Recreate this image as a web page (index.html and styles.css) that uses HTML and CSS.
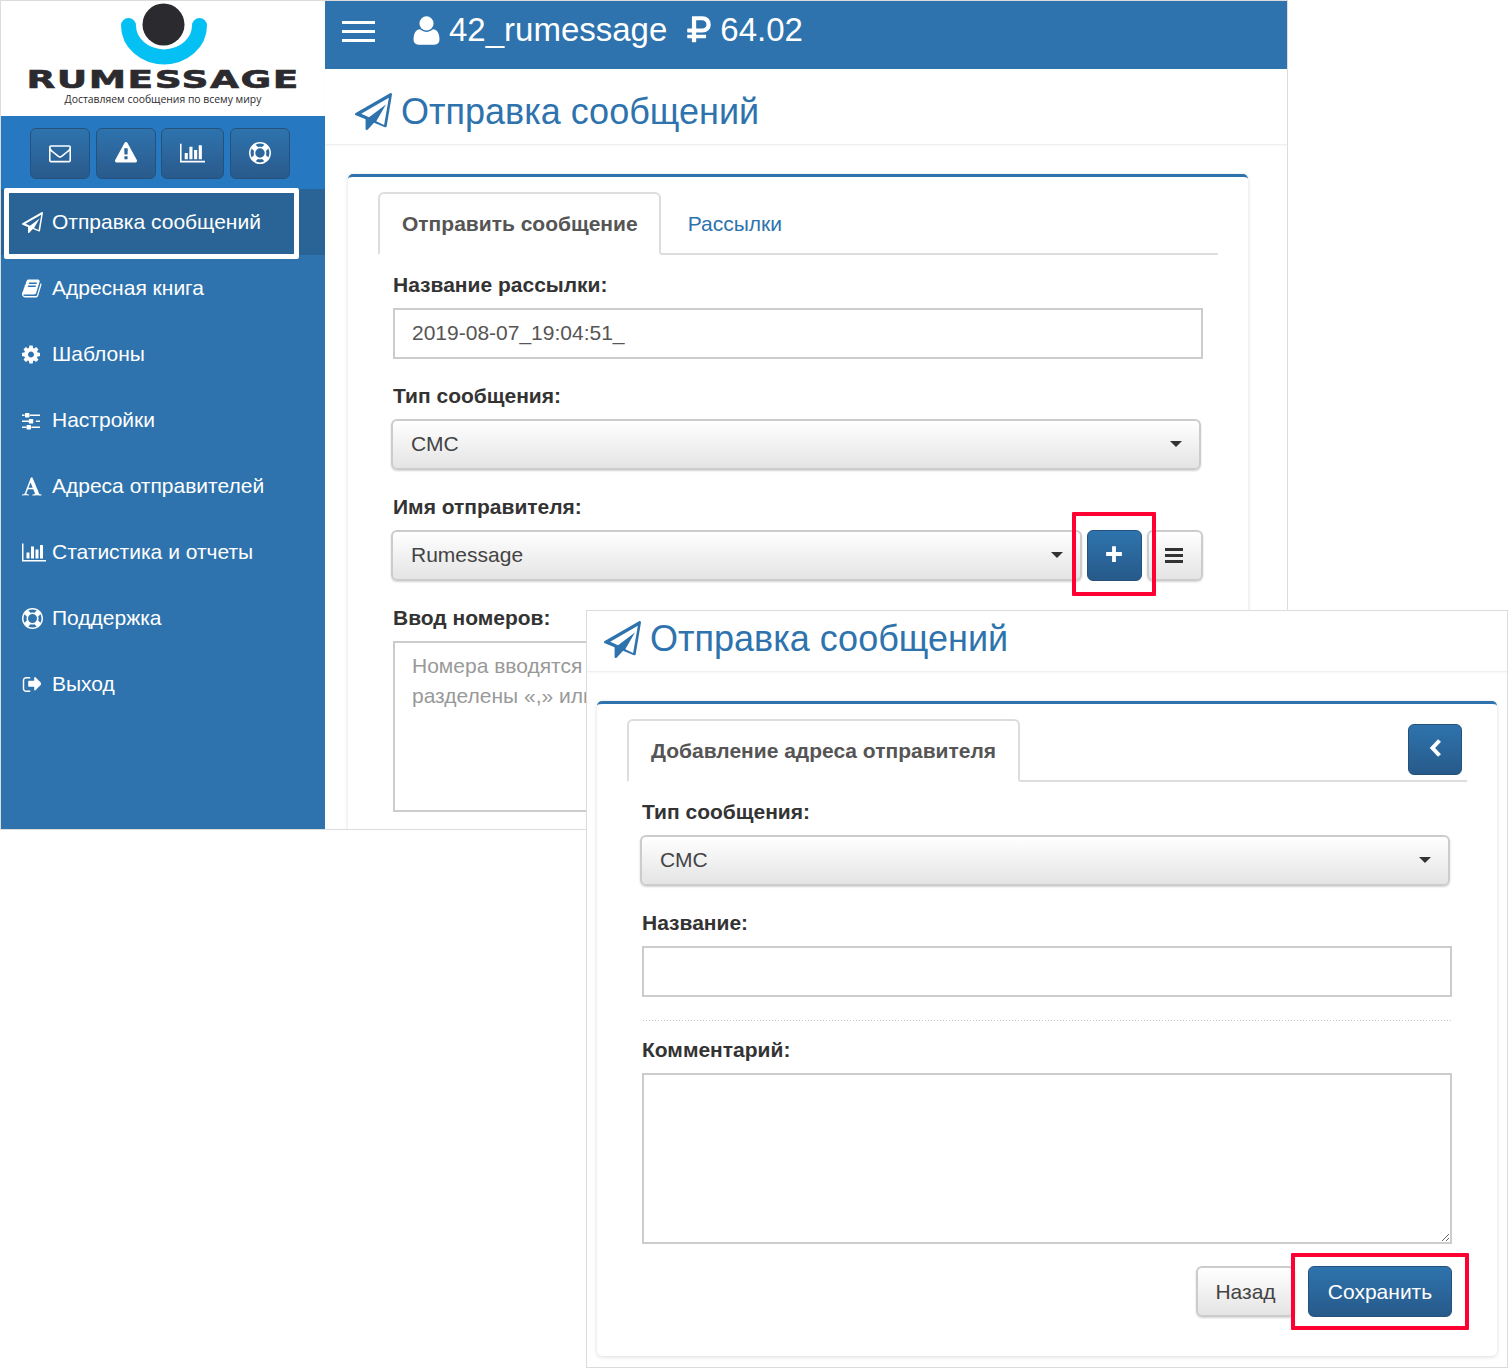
FILE: index.html
```html
<!DOCTYPE html>
<html lang="ru">
<head>
<meta charset="utf-8">
<title>Rumessage</title>
<link rel="stylesheet" href="styles.css">
</head>
<body>
<svg class="sprites" aria-hidden="true">
<symbol id="i-plane" viewBox="0 0 1792 1792"><path d="M1764 11q33 24 27 64l-256 1536q-5 29-32 45-14 8-31 8-11 0-24-5l-527-215-298 327q-18 21-47 21-14 0-23-4-19-7-30-23.5t-11-36.5v-452l-472-193q-37-14-40-55-3-39 32-59l1664-960q35-21 68 2zM1410 1545L1640 235L300 1000L680 1170L1500 560L1030 1370z"/></symbol>
<symbol id="i-user" viewBox="0 0 1792 1792"><path d="M1600 1405q0 120-73 189.5t-194 69.5h-874q-121 0-194-69.5t-73-189.5q0-53 3.5-103.5t14-109 26.5-108.5 43-97.5 62-81 85.5-53.5 111.5-20q9 0 42 21.5t74.5 48 108 48 133.5 21.5 133.5-21.5 108-48 74.5-48 42-21.5q61 0 111.5 20t85.5 53.5 62 81 43 97.5 26.5 108.5 14 109 3.5 103.5zm-320-893q0 159-112.5 271.5t-271.5 112.5-271.5-112.5-112.5-271.5 112.5-271.5 271.5-112.5 271.5 112.5 112.5 271.5z"/></symbol>
<symbol id="i-rouble" viewBox="0 0 1280 1792"><path d="M1043 565q0-100-65-162t-171-62h-320v448h320q106 0 171-62t65-162zm237 0q0 193-126.5 315t-326.5 122h-340v118h505q14 0 23 9t9 23v128q0 14-9 23t-23 9h-505v192q0 14-9.5 23t-22.5 9h-167q-14 0-23-9t-9-23v-192h-224q-14 0-23-9t-9-23v-128q0-14 9-23t23-9h224v-118h-224q-14 0-23-9t-9-23v-149q0-13 9-22.5t23-9.5h224v-629q0-14 9-23t23-9h539q200 0 326.5 122t126.5 315z"/></symbol>
<symbol id="i-envelope" viewBox="0 0 1792 1792"><path d="M1664 1504v-768q-32 36-69 66-268 206-426 338-51 43-83 67t-86.5 48.5-102.5 24.5h-2q-48 0-102.5-24.5t-86.5-48.5-83-67q-158-132-426-338-37-30-69-66v768q0 13 9.5 22.5t22.5 9.5h1472q13 0 22.5-9.5t9.5-22.5zm0-1051v-24.5l-.5-13-3-12.5-5.5-9-9-7.5-14-2.5h-1472q-13 0-22.5 9.5t-9.5 22.5q0 168 147 284 193 152 401 317 6 5 35 29.5t46 37.5 44.5 31.5 50.5 27.5 43 9h2q20 0 43-9t50.5-27.5 44.5-31.5 46-37.5 35-29.5q208-165 401-317 54-43 100.5-115.5t46.5-131.5zm128-37v1088q0 66-47 113t-113 47h-1472q-66 0-113-47t-47-113v-1088q0-66 47-113t113-47h1472q66 0 113 47t47 113z"/></symbol>
<symbol id="i-warning" viewBox="0 0 1792 1792"><path d="M1024 1375v-190q0-14-9.5-23.5t-22.5-9.5h-192q-13 0-22.5 9.5t-9.5 23.5v190q0 14 9.5 23.5t22.5 9.5h192q13 0 22.5-9.5t9.5-23.5zm-2-374l18-459q0-12-10-19-13-11-24-11h-220q-11 0-24 11-10 7-10 21l17 457q0 10 10 16.5t24 6.5h185q14 0 23.5-6.5t10.5-16.5zm-14-934l768 1408q35 63-2 126-17 29-46.5 46t-63.5 17h-1536q-34 0-63.5-17t-46.5-46q-37-63-2-126l768-1408q17-31 47-49t65-18 65 18 47 49z"/></symbol>
<symbol id="i-chart" viewBox="0 0 2048 1792"><path d="M640 896v512h-256v-512h256zm384-512v1024h-256v-1024h256zm1024 1152v128h-2048v-1536h128v1408h1920zm-640-896v768h-256v-768h256zm384-384v1152h-256v-1152h256z"/></symbol>
<symbol id="i-ring" viewBox="0 0 1792 1792"><path d="M896 0q182 0 348 71t286 191 191 286 71 348-71 348-191 286-286 191-348 71-348-71-286-191-191-286-71-348 71-348 191-286 286-191 348-71zm0 128q-190 0-361 90l194 194q82-28 167-28t167 28l194-194q-171-90-361-90zm-678 1129l194-194q-28-82-28-167t28-167l-194-194q-90 171-90 361t90 361zm678 407q190 0 361-90l-194-194q-82 28-167 28t-167-28l-194 194q171 90 361 90zm0-384q159 0 271.5-112.5t112.5-271.5-112.5-271.5-271.5-112.5-271.5 112.5-112.5 271.5 112.5 271.5 271.5 112.5zm484-217l194 194q90-171 90-361t-90-361l-194 194q28 82 28 167t-28 167z"/></symbol>
<symbol id="i-book" viewBox="64 0 1792 1792"><path d="M1703 478q40 57 18 129l-275 906q-19 64-76.500 107.500t-122.500 43.500h-923q-77 0-148.500-53.500t-99.500-131.500q-24-67-2-127 0-4 3-27t4-37q1-8-3-21.500t-3-19.500q2-11 8-21t16.500-23.500 16.500-23.500q23-38 45-91.500t30-91.500q3-10 .5-30t-.5-28q3-11 17-28t17-23q21-36 42-92t25-90q1-9-2.500-32t.5-28q4-13 22-30.500t22-22.500q19-26 42.500-84.500t27.500-96.500q1-8-3-25.500t-2-26.500q2-8 9-18t18-23 17-21q8-12 16.500-30.500t15-35 16-36 19.500-32 26.500-23.500 36-11.500 47.500 5.500l-1 3q38-9 51-9h761q74 0 114 56t18 130l-274 906q-36 119-71.500 153.500t-128.500 34.500h-869q-27 0-38 15-11 16-1 43 24 70 144 70h923q29 0 56-15.500t35-41.500l300-987q7-22 5-57 38 15 59 43zm-1064 2q-4 13 2 22.500t20 9.500h608q13 0 25.500-9.500t16.500-22.500l21-64q4-13-2-22.500t-20-9.500h-608q-13 0-25.500 9.500t-16.500 22.500zm-83 256q-4 13 2 22.500t20 9.500h608q13 0 25.500-9.500t16.500-22.500l21-64q4-13-2-22.500t-20-9.500h-608q-13 0-25.500 9.500t-16.500 22.500z"/></symbol>
<symbol id="i-cog" viewBox="128 0 1792 1792"><path d="M1152 896q0-106-75-181t-181-75-181 75-75 181 75 181 181 75 181-75 75-181zm512-109v222q0 12-8 23t-20 13l-185 28q-19 54-39 91 35 50 107 138 10 12 10 25t-9 23q-27 37-99 108t-94 71q-12 0-26-9l-138-108q-44 23-91 38-16 136-29 186-7 28-36 28h-222q-14 0-24.500-8.500t-11.500-21.500l-28-184q-49-16-90-37l-141 107q-10 9-25 9-14 0-25-11-126-114-165-168-7-10-7-23 0-12 8-23 15-21 51-66.500t54-70.500q-27-50-41-99l-183-27q-13-2-21-12.500t-8-23.500v-222q0-12 8-23t19-13l186-28q14-46 39-92-40-57-107-138-10-12-10-24 0-10 9-23 26-36 98.500-107.500t94.500-71.500q13 0 26 10l138 107q44-23 91-38 16-136 29-186 7-28 36-28h222q14 0 24.500 8.500t11.500 21.500l28 184q49 16 90 37l142-107q9-9 24-9 13 0 25 10 129 119 165 170 7 8 7 22 0 12-8 23-15 21-51 66.500t-54 70.500q26 50 41 98l183 28q13 2 21 12.500t8 23.500z"/></symbol>
<symbol id="i-sliders" viewBox="128 0 1792 1792"><path d="M480 1408v128h-352v-128h352zm352-128q26 0 45 19t19 45v256q0 26-19 45t-45 19h-256q-26 0-45-19t-19-45v-256q0-26 19-45t45-19h256zm160-384v128h-864v-128h864zm-640-512v128h-224v-128h224zm1312 1024v128h-736v-128h736zm-960-1152q26 0 45 19t19 45v256q0 26-19 45t-45 19h-256q-26 0-45-19t-19-45v-256q0-26 19-45t45-19h256zm320 512q26 0 45 19t19 45v256q0 26-19 45t-45 19h-256q-26 0-45-19t-19-45v-256q0-26 19-45t45-19h256zm640-384v128h-864v-128h864zm0 512v128h-352v-128h352z"/></symbol>
<symbol id="i-font" viewBox="64 0 1792 1792"><path d="M789 559l-170 450q33 0 136.500 2t160.500 2q19 0 57-2-87-253-184-452zm-725 1105l2-79q23-7 56-12.500t57-10.500 49.500-14.500 44.500-29 31-50.500l237-616 280-724h128q8 14 11 21l205 480q33 78 106 257.500t114 274.500q15 34 58 144.500t72 168.500q20 45 35 57 19 15 88 29.500t84 20.500q6 38 6 57 0 4-.5 13t-.5 13q-63 0-190-8t-191-8q-76 0-215 7t-178 8q0-43 4-78l131-28q1 0 12.500-2.500t15.500-3.500 14.500-4.500 15-6.500 11-8 9-11 2.500-14q0-16-31-96.500t-72-177.500-42-100l-450-2q-26 58-76.500 195.500t-50.500 162.500q0 22 14 37.500t43.500 24.500 48.500 13.500 57 8.500 41 4q1 19 1 58 0 9-2 27-58 0-174.500-10t-174.500-10q-8 0-26.500 4t-21.500 4q-80 14-188 14z"/></symbol>
<symbol id="i-exit" viewBox="0 0 1664 1792"><path d="M640 1440q0 4 1 20t.5 26.500-3 23.500-10 19.500-20.500 6.500h-320q-119 0-203.500-84.500t-84.500-203.500v-704q0-119 84.500-203.500t203.500-84.500h320q13 0 22.500 9.500t9.500 22.500q0 4 1 20t.5 26.500-3 23.500-10 19.500-20.500 6.500h-320q-66 0-113 47t-47 113v704q0 66 47 113t113 47h288 22.500t26 .5 23 3 17.500 10 6 18zm912-544q0 26-19 45l-448 448q-19 19-45 19t-45-19-19-45v-256h-448q-26 0-45-19t-19-45v-384q0-26 19-45t45-19h448v-256q0-26 19-45t45-19 45 19l448 448q19 19 19 45z"/></symbol>
</svg>

<section class="window window-main">
  <aside class="sidebar">
    <div class="logo">
      <svg class="logo-mark" viewBox="0 0 90 66" aria-hidden="true">
        <path class="logo-arc" d="M9.500 24.500A35 31 0 0 0 80.500 24.500"/>
        <circle class="logo-head" cx="44.500" cy="23.500" r="21"/>
      </svg>
      <div class="logo-name">RUMESSAGE</div>
      <div class="logo-tag">Доставляем сообщения по всему миру</div>
    </div>
    <div class="quick">
      <a class="quick-btn"><svg class="qi"><use href="#i-envelope"/></svg></a>
      <a class="quick-btn"><svg class="qi"><use href="#i-warning"/></svg></a>
      <a class="quick-btn quick-wide"><svg class="qi"><use href="#i-chart"/></svg></a>
      <a class="quick-btn"><svg class="qi"><use href="#i-ring"/></svg></a>
    </div>
    <nav class="menu">
      <a class="menu-item active"><span class="mi-box"><svg class="mi"><use href="#i-plane"/></svg></span>Отправка сообщений</a>
      <a class="menu-item"><span class="mi-box"><svg class="mi"><use href="#i-book"/></svg></span>Адресная книга</a>
      <a class="menu-item"><span class="mi-box"><svg class="mi"><use href="#i-cog"/></svg></span>Шаблоны</a>
      <a class="menu-item"><span class="mi-box"><svg class="mi"><use href="#i-sliders"/></svg></span>Настройки</a>
      <a class="menu-item"><span class="mi-box"><svg class="mi"><use href="#i-font"/></svg></span>Адреса отправителей</a>
      <a class="menu-item"><span class="mi-box"><svg class="mi mi-wide"><use href="#i-chart"/></svg></span>Статистика и отчеты</a>
      <a class="menu-item"><span class="mi-box"><svg class="mi"><use href="#i-ring"/></svg></span>Поддержка</a>
      <a class="menu-item"><span class="mi-box"><svg class="mi"><use href="#i-exit"/></svg></span>Выход</a>
    </nav>
  </aside>
  <main class="content">
    <header class="topbar">
      <span class="burger"><i></i><i></i><i></i></span>
      <svg class="top-user"><use href="#i-user"/></svg>
      <span class="top-name">42_rumessage</span>
      <svg class="top-rouble"><use href="#i-rouble"/></svg>
      <span class="top-sum">64.02</span>
    </header>
    <div class="page-title">
      <svg class="title-icon"><use href="#i-plane"/></svg>
      <h1>Отправка сообщений</h1>
    </div>
    <div class="box">
      <div class="tabs">
        <a class="tab tab-active">Отправить сообщение</a>
        <a class="tab">Рассылки</a>
      </div>
      <form class="form">
        <div class="field">
          <label class="label">Название рассылки:</label>
          <input class="input" type="text" value="2019-08-07_19:04:51_">
        </div>
        <div class="field">
          <label class="label">Тип сообщения:</label>
          <div class="select">СМС<span class="caret"></span></div>
        </div>
        <div class="field">
          <label class="label">Имя отправителя:</label>
          <div class="input-group">
            <div class="select select-grow">Rumessage<span class="caret"></span></div>
            <a class="btn-primary btn-plus"><svg class="plus" viewBox="0 0 16 16"><path d="M6.300 1h3.400v5.300H15v3.400H9.700V15H6.300V9.700H1V6.300h5.300z"/></svg></a>
            <a class="btn-list"><span class="bars"><i></i><i></i><i></i></span></a>
          </div>
        </div>
        <div class="field">
          <label class="label">Ввод номеров:</label>
          <textarea class="textarea" placeholder="Номера вводятся в международном формате без плюса и пробелов, разделены «,» или с новой строки"></textarea>
        </div>
      </form>
    </div>
  </main>
</section>

<div class="note note-menu"></div>
<div class="note-red note-plus"></div>

<section class="window window-add">
  <div class="page-title page-title-add">
    <svg class="title-icon"><use href="#i-plane"/></svg>
    <h1>Отправка сообщений</h1>
  </div>
  <div class="box box-add">
    <div class="tabs">
      <a class="tab tab-active">Добавление адреса отправителя</a>
      <a class="btn-primary btn-back"><svg class="chev" viewBox="0 0 14 20"><path d="M10.500 2.500 3.500 10l7 7.500"/></svg></a>
    </div>
    <form class="form">
      <div class="field">
        <label class="label">Тип сообщения:</label>
        <div class="select">СМС<span class="caret"></span></div>
      </div>
      <div class="field field-sep">
        <label class="label">Название:</label>
        <input class="input" type="text">
      </div>
      <div class="field">
        <label class="label">Комментарий:</label>
        <textarea class="textarea"></textarea>
      </div>
      <div class="actions">
        <a class="btn-default">Назад</a>
        <a class="btn-primary btn-save">Сохранить</a>
      </div>
    </form>
  </div>
</section>

<div class="note-red note-save"></div>
</body>
</html>
```

FILE: styles.css
```css
* { box-sizing: border-box; }
html, body { margin: 0; padding: 0; }
body {
  position: relative;
  width: 1508px;
  height: 1368px;
  overflow: hidden;
  background: #fff;
  font-family: "Liberation Sans", Arial, sans-serif;
  font-size: 21px;
  color: #333;
}
.sprites { position: absolute; width: 0; height: 0; }
svg { fill: currentColor; display: block; }
a { text-decoration: none; }

.window { position: absolute; background: #fff; overflow: hidden; }
.window-main {
  left: 0; top: 0; width: 1288px; height: 830px;
  display: flex;
  border: 1px solid #dcdcdc;
}
.window-add {
  left: 586px; top: 610px; width: 922px; height: 758px;
  border: 1px solid #dcdcdc;
}

.sidebar { width: 324px; flex: none; background: #2e73ad; color: #fff; display: flex; flex-direction: column; }
.logo { height: 115px; background: #fff; color: #2b2a2e; display: flex; flex-direction: column; align-items: center; }
.logo-mark { width: 90px; height: 66px; flex: none; margin-left: 1px; }
.logo-arc { fill: none; stroke: #05c0f2; stroke-width: 15; stroke-linecap: round; }
.logo-head { fill: #2b2a2e; }
.logo-name {
  font-family: "DejaVu Sans", sans-serif;
  font-weight: 700;
  font-size: 25px;
  line-height: 24px;
  letter-spacing: 1px;
  margin-top: 1px;
  transform: scaleX(1.5);
  -webkit-text-stroke: .6px #2b2a2e;
}
.logo-tag { font-family: "Open Sans", sans-serif; font-size: 10.400px; line-height: 14px; }

.quick { height: 73px; background: #2678c0; display: flex; gap: 6px; padding: 12px 0 10px 29px; }
.quick-btn {
  width: 60px; height: 51px;
  display: flex; align-items: center; justify-content: center;
  padding: 0 1px 2px 0;
  border: 1px solid #24527b;
  border-radius: 6px;
  background: linear-gradient(#2e73ad, #2a5a8c);
  color: #fff;
}
.quick-wide { width: 63px; margin-left: -1px; }
.qi { width: 22px; height: 22px; }
.quick-wide .qi { width: 25px; }

.menu { display: flex; flex-direction: column; }
.menu-item { height: 66px; display: flex; align-items: center; color: #fff; font-size: 21px; }
.menu-item.active { background: #2a6496; }
.mi-box { width: 51px; padding-left: 21px; flex: none; }
.mi { width: 21px; height: 21px; }
.mi-wide { width: 24px; }

.content { flex: 1; min-width: 0; display: flex; flex-direction: column; }
.topbar { height: 68px; flex: none; background: #2e73ad; color: #fff; display: flex; align-items: center; padding-left: 17px; padding-bottom: 10px; font-size: 33px; }
.burger { display: flex; flex-direction: column; gap: 6px; width: 33px; margin-top: 2px; margin-right: 37px; }
.burger i { display: block; height: 3px; background: #fff; }
.top-user { width: 33px; height: 33px; margin-right: 6px; margin-left: -2px; }
.top-name { margin-right: 20px; }
.top-rouble { width: 24px; height: 33px; margin-right: 9px; }

.page-title { height: 76px; flex: none; display: flex; align-items: center; padding-left: 30px; padding-top: 10px; color: #2e73ad; border-bottom: 1px solid #efefef; box-shadow: 0 1px 2px rgba(0,0,0,.04); }
.page-title-add { height: 61px; padding: 0 0 4px 17px; }
.page-title h1 { margin: 0 0 0 9px; font-size: 36px; font-weight: 400; line-height: 44px; }
.title-icon { width: 37px; height: 37px; flex: none; }

.box { margin: 29px 39px 0 23px; flex: 1; padding: 15px 30px 0 30px; background: #fff; border-top: 3px solid #2e73ad; border-radius: 5px 5px 0 0; box-shadow: 0 1px 4px rgba(0,0,0,.14); }
.box-add { margin: 29px 10px 0 10px; height: 655px; border-radius: 5px; }

.tabs { height: 63px; display: flex; justify-content: flex-start; border-bottom: 2px solid #ddd; }
.box-add .tabs { justify-content: space-between; }
.tab { height: 63px; padding: 0 21px 0 22px; display: flex; align-items: center; color: #2e73ad; font-size: 21px; border: 2px solid transparent; }
.tab-active { color: #555; font-weight: 700; background: #fff; border-color: #ddd #ddd transparent; border-radius: 6px 6px 0 0; }
.tab-active + .tab { padding-left: 25px; }
.box-add .tab-active { padding-right: 22px; }

.form { padding: 15px 15px 0 15px; }
.field { margin-bottom: 22px; }
.field-sep { margin-bottom: 14px; padding-bottom: 24px; background: radial-gradient(circle, #c4c4c4 .6px, transparent .8px) left bottom / 3px 1px repeat-x; }
.label { display: block; font-weight: 700; font-size: 21px; line-height: 30px; margin-bottom: 8px; }
.input, .textarea {
  display: block;
  width: 810px;
  height: 51px;
  padding: 0 17px 2px;
  border: 2px solid #ccc;
  background: #fff;
  font: 21px/30px "Liberation Sans", Arial, sans-serif;
  color: #555;
  border-radius: 0;
  outline: 0;
}
.textarea { height: 171px; padding: 8px 17px; }
.textarea::placeholder { color: #999; opacity: 1; }

.select {
  position: relative;
  width: 810px; height: 51px; margin-left: -2px;
  padding: 0 0 2px 18px;
  display: flex; align-items: center;
  border: 2px solid #ccc;
  border-radius: 6px;
  background: linear-gradient(#fff, #e4e4e4);
  box-shadow: 0 1px 2px rgba(0,0,0,.18);
  color: #444;
}
.caret { position: absolute; right: 17px; top: 20px; width: 0; height: 0; border: 6px solid transparent; border-top: 6px solid #333; border-bottom: 0; }
.input-group { display: flex; margin-left: -2px; width: 812px; height: 51px; }
.select-grow { flex: 1; width: auto; margin-left: 0; }
.btn-primary {
  display: flex; align-items: center; justify-content: center;
  border: 1px solid #24527b;
  border-radius: 6px;
  background: linear-gradient(#2e73ad, #275a8a);
  color: #fff;
}
.btn-plus { width: 55px; margin: 0 5px; flex: none; }
.plus { width: 18px; height: 18px; margin: -3px 2px 0 0; }
.btn-list {
  width: 56px; flex: none;
  display: flex; align-items: center; justify-content: center;
  border: 2px solid #ccc;
  border-radius: 6px;
  background: linear-gradient(#fff, #e4e4e4);
  box-shadow: 0 1px 2px rgba(0,0,0,.18);
}
.bars { display: flex; flex-direction: column; gap: 3px; width: 18px; margin-right: 2px; }
.bars i { display: block; height: 3px; background: #333; }

.btn-back { width: 54px; height: 51px; margin: 5px 5px 0 0; }
.chev { width: 14px; height: 20px; fill: none; stroke: #fff; stroke-width: 4; margin: -4px 0 0 2px; }

.actions { display: flex; justify-content: flex-end; gap: 13px; margin-top: 2px; }
.btn-default {
  width: 99px; height: 51px; display: flex; align-items: center; justify-content: center;
  border: 2px solid #ccc; border-radius: 6px;
  background: linear-gradient(#fff, #e4e4e4);
  box-shadow: 0 1px 2px rgba(0,0,0,.18);
  color: #444;
}
.btn-save { width: 144px; height: 51px; }

.note { position: absolute; border: 5px solid #fff; border-radius: 2px; }
.note-menu { left: 4px; top: 188px; width: 295px; height: 71px; }
.note-red { position: absolute; border: 4px solid #ff0033; border-radius: 1px; z-index: 2; }
.note-plus { left: 1072px; top: 512px; width: 84px; height: 84px; }
.note-save { left: 1291px; top: 1253px; width: 178px; height: 77px; }
```
